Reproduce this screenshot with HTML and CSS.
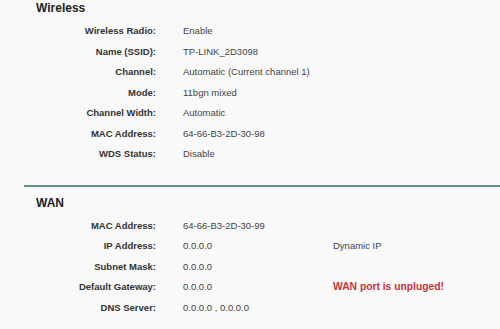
FILE: index.html
```html
<!DOCTYPE html>
<html lang="en">
<head>
    <meta charset="UTF-8">
    <meta name="viewport" content="width=device-width, initial-scale=1.0">
    <title>Status</title>
    <link rel="stylesheet" href="styles.css">
</head>
<body>

    <!-- Wireless -->
    <div class="section">
        <h2 class="section-title">Wireless</h2>
        <div class="info-table">
            <div class="label">Wireless Radio:</div><div class="value">Enable</div><div class="extra"></div>
            <div class="label">Name (SSID):</div><div class="value">TP-LINK_2D3098</div><div class="extra"></div>
            <div class="label">Channel:</div><div class="value wide">Automatic (Current channel 1)</div>
            <div class="label">Mode:</div><div class="value">11bgn mixed</div><div class="extra"></div>
            <div class="label">Channel Width:</div><div class="value">Automatic</div><div class="extra"></div>
            <div class="label">MAC Address:</div><div class="value">64-66-B3-2D-30-98</div><div class="extra"></div>
            <div class="label">WDS Status:</div><div class="value">Disable</div><div class="extra"></div>
        </div>
    </div>

    <hr class="divider">

    <!-- WAN -->
    <div class="section">
        <h2 class="section-title">WAN</h2>
        <div class="info-table">
            <div class="label">MAC Address:</div><div class="value">64-66-B3-2D-30-99</div><div class="extra"></div>
            <div class="label">IP Address:</div><div class="value">0.0.0.0</div><div class="extra">Dynamic IP</div>
            <div class="label">Subnet Mask:</div><div class="value">0.0.0.0</div><div class="extra"></div>
            <div class="label">Default Gateway:</div><div class="value">0.0.0.0</div><div class="extra warning">WAN port is unpluged!</div>
            <div class="label">DNS Server:</div><div class="value">0.0.0.0 , 0.0.0.0</div><div class="extra"></div>
        </div>
    </div>

</body>
</html>
```

FILE: styles.css
```css
body {
    margin: 0;
    background-color: #f9f9f9;
    font-family: "Liberation Sans", Arial, sans-serif;
    color: #333;
    overflow: hidden;
}
.section-title {
    margin: 0 0 5px 36px;
    font-size: 12px;
    line-height: 16px;
    font-weight: bold;
    color: #222;
}
.info-table {
    display: grid;
    grid-template-columns: 156px 123px 1fr;
    column-gap: 27px;
    font-size: 9.5px;
    line-height: 20.5px;
}
.label {
    text-align: right;
    font-weight: bold;
    color: #333;
    white-space: nowrap;
}
.value {
    white-space: nowrap;
    color: #444;
}
.value.wide {
    grid-column: span 2;
}
.extra {
    color: #444;
    white-space: nowrap;
}
.warning {
    color: #c9333d;
    font-weight: bold;
    font-size: 10.3px;
}
.divider {
    margin: 20px 0 8px 24px;
    border: 0;
    border-top: 2px solid #66908a;
    height: 0;
}
```
